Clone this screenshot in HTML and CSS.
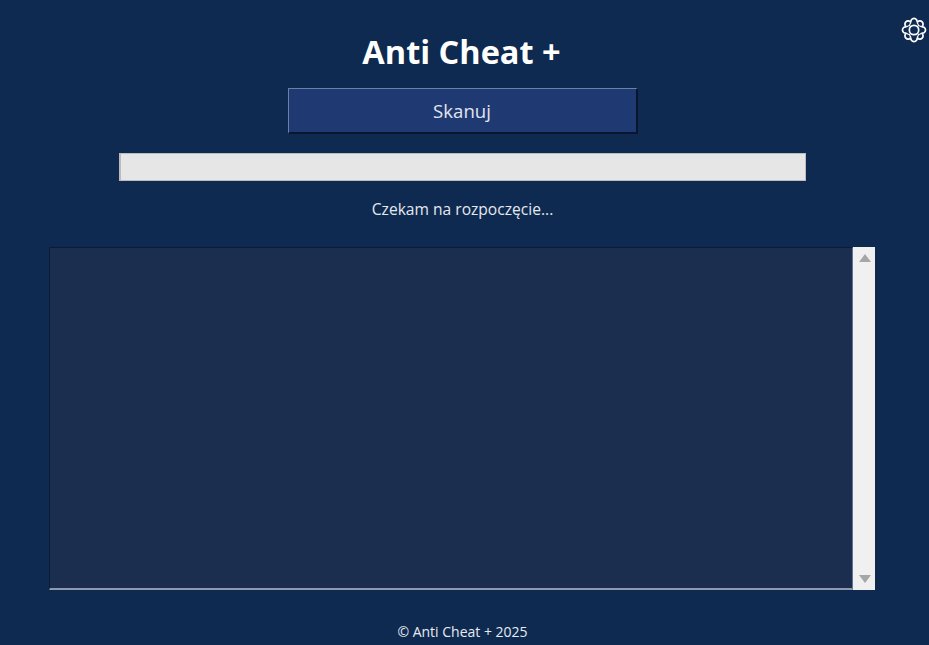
FILE: index.html
```html
<!DOCTYPE html>
<html lang="pl">
<head>
<meta charset="utf-8">
<title>Anti Cheat +</title>
<link rel="stylesheet" href="styles.css">
</head>
<body>
<button class="gear" aria-label="Ustawienia">
<svg viewBox="0 0 26 26" width="26" height="26" fill="none" stroke="#fff" stroke-width="1.7">
<circle cx="13" cy="13" r="4.7"/>
<path d="M9.94 5.61A3.2 3.2 0 1 1 16.06 5.61A3.2 3.2 0 1 1 20.39 9.94A3.2 3.2 0 1 1 20.39 16.06A3.2 3.2 0 1 1 16.06 20.39A3.2 3.2 0 1 1 9.94 20.39A3.2 3.2 0 1 1 5.61 16.06A3.2 3.2 0 1 1 5.61 9.94A3.2 3.2 0 1 1 9.94 5.61Z"/>
<path stroke-width="1.2" d="M9.94 5.61Q8.6 7 8.6 8.6Q7 8.6 5.61 9.94M16.06 5.61Q17.4 7 17.4 8.6Q19 8.6 20.39 9.94M20.39 16.06Q19 17.4 17.4 17.4Q17.4 19 16.06 20.39M9.94 20.39Q8.6 19 8.6 17.4Q7 17.4 5.61 16.06"/>
</svg>
</button>
<main class="app">
<h1 class="title">Anti Cheat +</h1>
<button class="scan">Skanuj</button>
<div class="progress"></div>
<p class="status">Czekam na rozpoczęcie...</p>
<div class="log">
<div class="log-area"></div>
<div class="scrollbar">
<span class="arrow arrow-up"></span>
<span class="arrow arrow-down"></span>
</div>
</div>
<footer class="footer">© Anti Cheat + 2025</footer>
</main>
</body>
</html>
```
FILE: styles.css
```css
* { box-sizing: border-box; }
html, body { margin: 0; height: 100%; }
body {
  background: #0e2a50;
  color: #fff;
  font-family: "Open Sans", "Noto Sans", sans-serif;
  overflow: hidden;
  position: relative;
}
.gear {
  position: absolute;
  top: 17px;
  left: 901px;
  width: 26px;
  height: 26px;
  padding: 0;
  border: 0;
  background: none;
  display: block;
}
.gear svg { display: block; }
.app {
  width: 925px;
  height: 645px;
  display: flex;
  flex-direction: column;
  align-items: center;
}
.title {
  margin: 30px 2px 0 0;
  height: 44px;
  line-height: 44px;
  font-size: 32.5px;
  font-weight: 700;
  white-space: nowrap;
}
.scan {
  margin-top: 14px;
  width: 350px;
  height: 46px;
  background: #1f3a73;
  color: #e2e6ee;
  font: 18.6px/1 "Open Sans", sans-serif;
  border: 1px solid;
  border-color: #6b80a8 #0a1530 #0a1530 #6b80a8;
  border-width: 1px 2px 2px 1px;
  padding: 1px 0 0;
}
.progress {
  margin-top: 19px;
  width: 687px;
  height: 28px;
  background: #e6e6e6;
  border: 1px solid #bcbcbc;
  border-left-width: 2px;
}
.status {
  margin: 18px 0 0;
  height: 20px;
  line-height: 20px;
  font-size: 15.6px;
  color: #e4e8ef;
}
.log {
  margin: 28px 1px 0 0;
  width: 826px;
  height: 343px;
  display: flex;
  align-items: stretch;
}
.log-area {
  flex: 1;
  background: #1b2e4f;
  border: 1px solid #0b1c38;
  border-bottom: 2px solid #8e9aad;
  border-right: 1px solid #5f7394;
}
.scrollbar {
  width: 22px;
  background: #f0f0f0;
  display: flex;
  flex-direction: column;
  justify-content: space-between;
  align-items: center;
  padding: 7px 0 7px 1px;
}
.arrow {
  width: 0;
  height: 0;
  border-left: 6px solid transparent;
  border-right: 6px solid transparent;
}
.arrow-up { border-bottom: 8px solid #a6a6a6; }
.arrow-down { border-top: 8px solid #a6a6a6; }
.footer {
  margin-top: 32px;
  height: 20px;
  line-height: 20px;
  font-size: 14px;
  color: #e8ebf0;
}
```
